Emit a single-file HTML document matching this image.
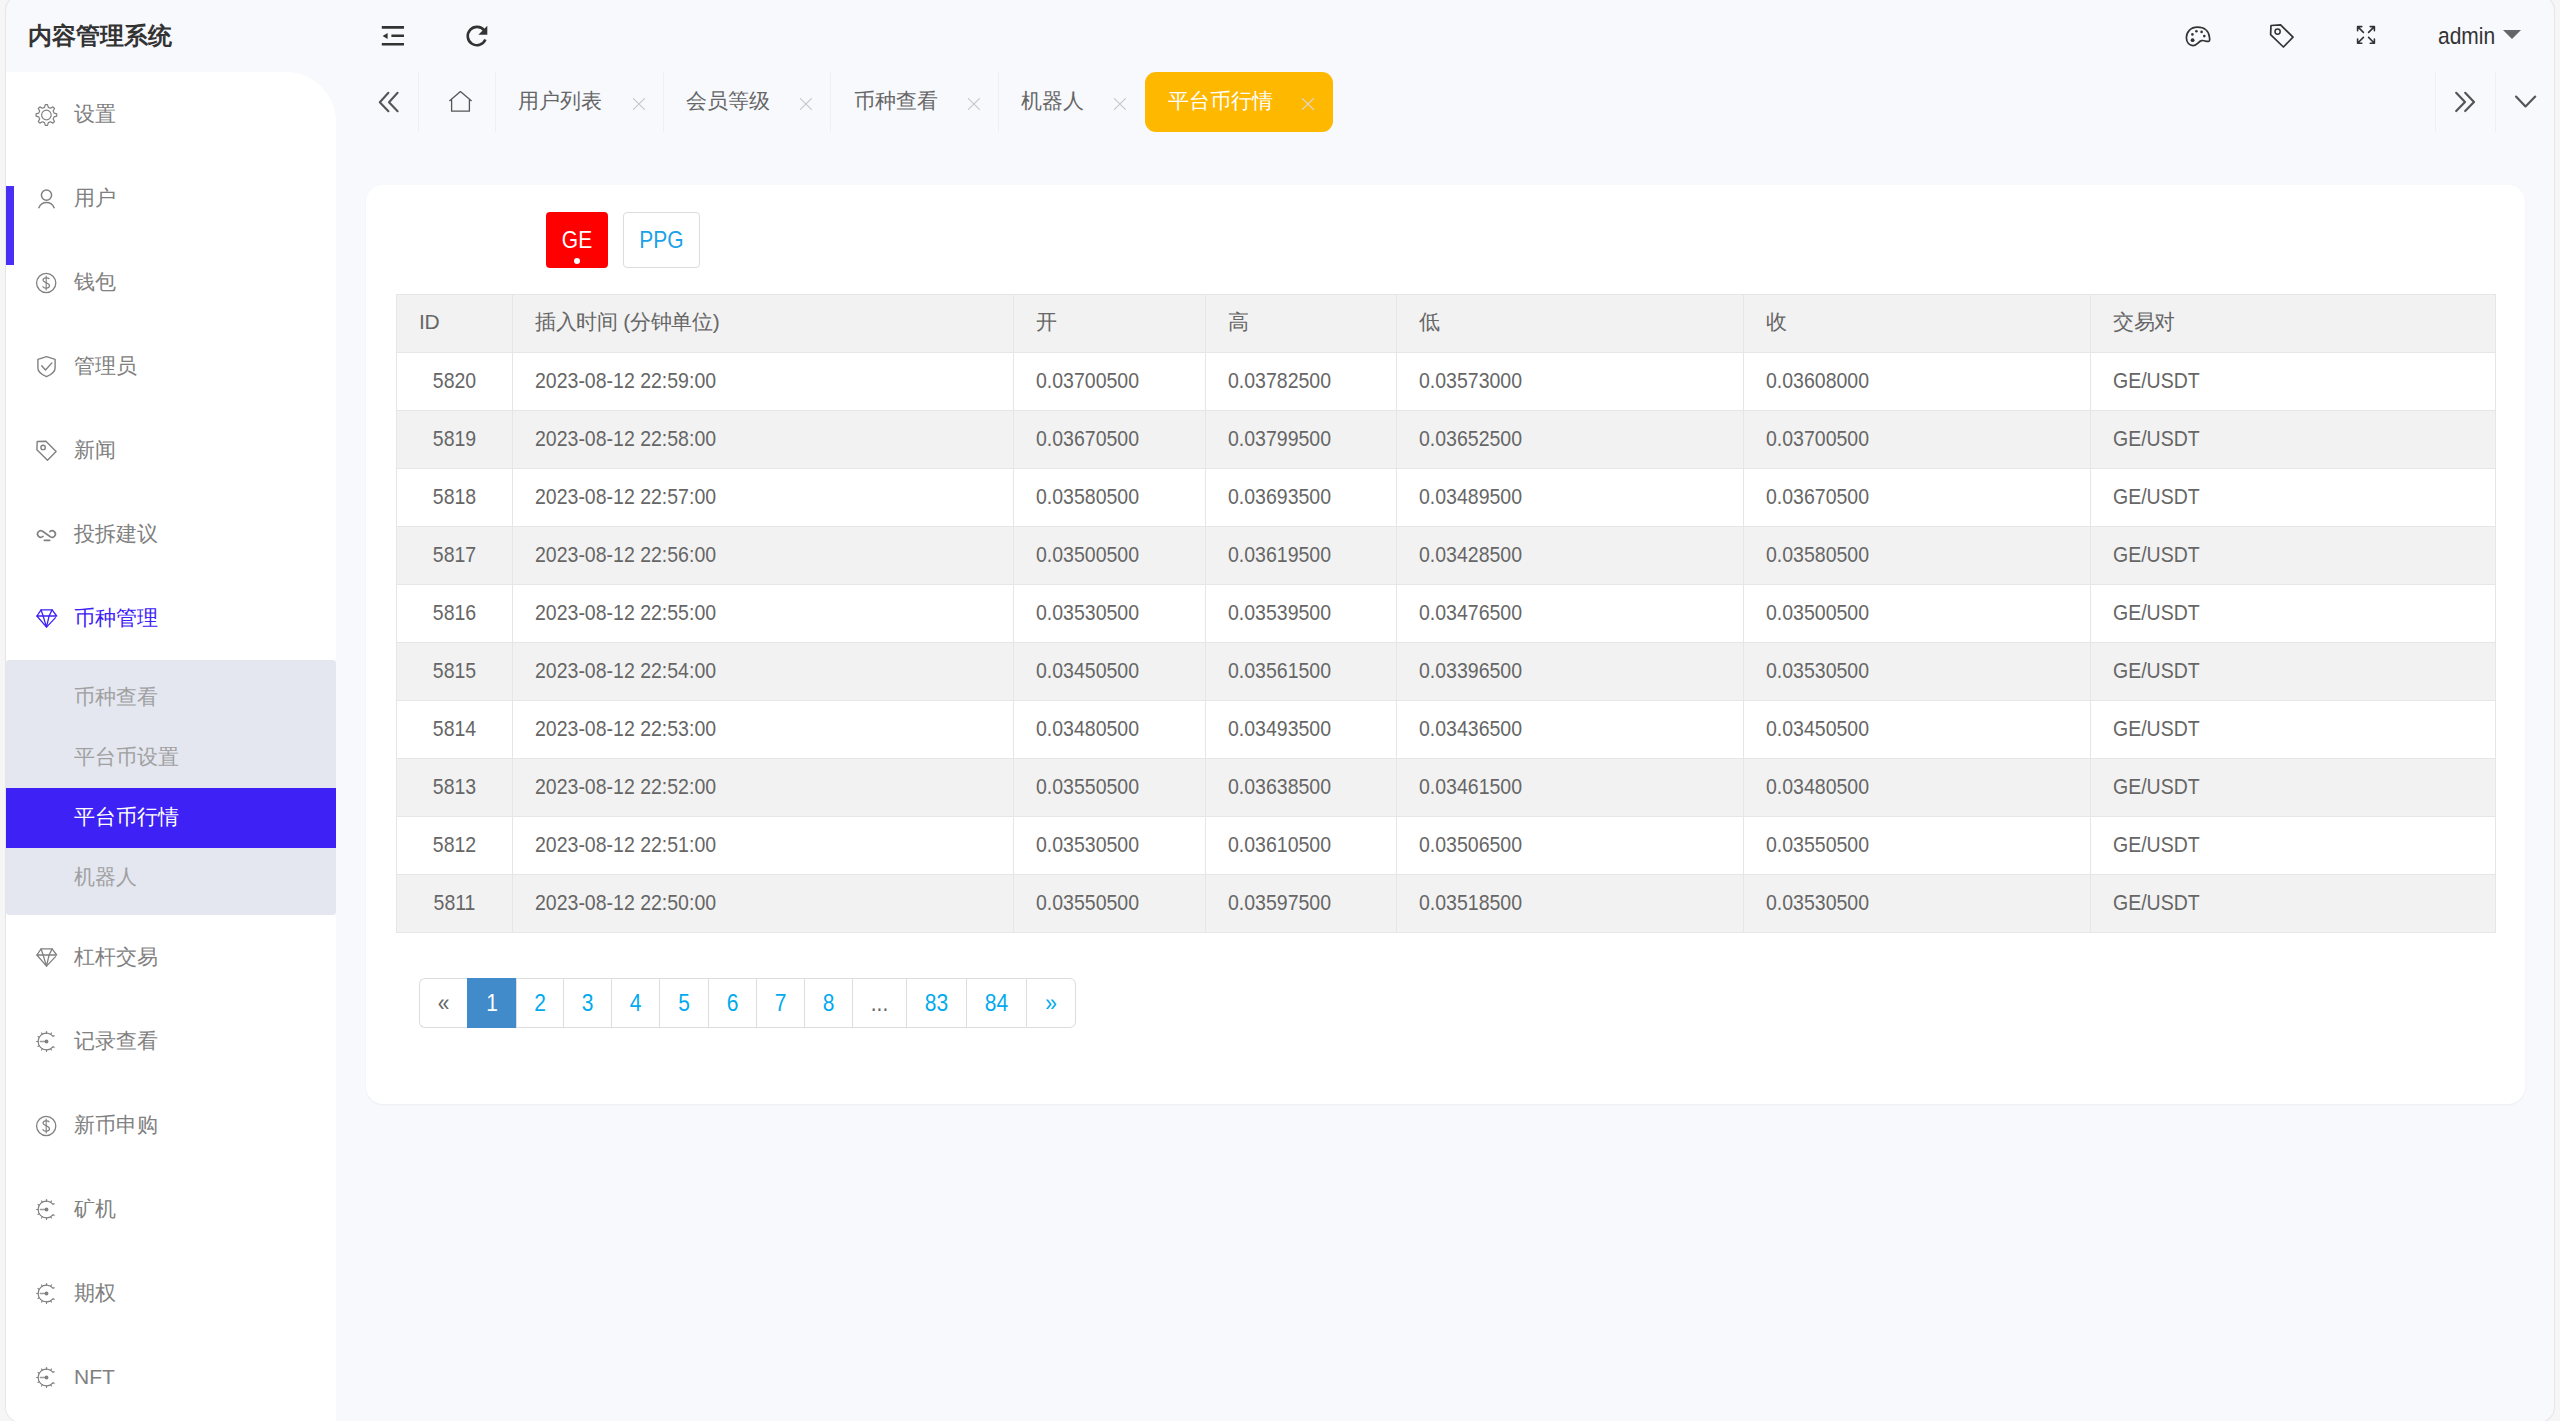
<!DOCTYPE html>
<html><head><meta charset="utf-8"><style>
*{box-sizing:border-box;margin:0;padding:0}
html,body{width:2560px;height:1421px;overflow:hidden;background:#f6f6f6;font-family:"Liberation Sans",sans-serif}
.a{position:absolute;white-space:nowrap}
#win{left:5px;top:-4px;width:2550px;height:1427px;border:1px solid #e6e6e6;border-radius:14px 14px 16px 16px;background:#f8f9fd;box-shadow:0 0 1px rgba(0,0,0,.05)}
#side{left:6px;top:72px;width:330px;height:1350px;background:#fff;border-top-right-radius:50px;border-bottom-left-radius:15px}
.mt{font-size:21px;line-height:30px;height:30px}
svg.i{position:absolute;overflow:visible}
.tb{font-size:21px;color:#666;line-height:30px;height:30px}
.sep{width:1px;height:60px;top:72px;background:#f0efee}
#card{left:366px;top:185px;width:2159px;height:919px;background:#fff;border-radius:17px;box-shadow:0 1px 2px rgba(0,0,0,.05)}
table{position:absolute;left:396px;top:294px;border-collapse:collapse;table-layout:fixed;font-size:19.5px;color:#666}
td,th{border:1px solid #e6e6e6;height:58px;padding:0 0 2px 22px;text-align:left;font-weight:normal;white-space:nowrap}
th{background:#f2f2f2;font-size:21px;letter-spacing:-0.3px;padding-bottom:3px}
tr.e td{background:#f2f2f2}
.sy,td span{display:inline-block;transform:scaleY(1.1);transform-origin:50% 50%}
td.c{text-align:center;padding:0 0 2px 0}
.pg{top:978px;height:50px;border:1px solid #ddd;border-right:none;font-size:21px;line-height:48px;text-align:center;color:#01aaed;background:#fff}
</style></head><body>
<div id="win" class="a"></div>
<div id="side" class="a"></div>
<div class="a" style="left:28px;top:21px;font-size:24px;font-weight:bold;color:#333;line-height:30px">内容管理系统</div>
<div class="a mt" style="left:74px;top:99px;color:#808080">设置</div>
<svg class="i" style="left:33px;top:102px" width="26" height="26" viewBox="33 102 26 26" fill="none" stroke="#808080" stroke-width="1.2" stroke-linecap="round" stroke-linejoin="round" ><path d="M44.52 107.33 L45.26 104.66 L47.54 104.66 L48.28 107.33 L50.50 108.25 L52.90 106.88 L54.52 108.50 L53.15 110.90 L54.07 113.12 L56.74 113.86 L56.74 116.14 L54.07 116.88 L53.15 119.10 L54.52 121.50 L52.90 123.12 L50.50 121.75 L48.28 122.67 L47.54 125.34 L45.26 125.34 L44.52 122.67 L42.30 121.75 L39.90 123.12 L38.28 121.50 L39.65 119.10 L38.73 116.88 L36.06 116.14 L36.06 113.86 L38.73 113.12 L39.65 110.90 L38.28 108.50 L39.90 106.88 L42.30 108.25Z"/><circle cx="46.4" cy="115" r="4.8"/></svg>
<div class="a mt" style="left:74px;top:183px;color:#808080">用户</div>
<svg class="i" style="left:33px;top:185px" width="26" height="26" viewBox="33 185 26 26" fill="none" stroke="#808080" stroke-width="1.5" stroke-linecap="round" stroke-linejoin="round" ><circle cx="46.5" cy="195.1" r="5.1"/><path d="M38.9 207.7 A8.2 8.2 0 0 1 54.1 207.7"/></svg>
<div class="a mt" style="left:74px;top:267px;color:#808080">钱包</div>
<svg class="i" style="left:33px;top:270px" width="26" height="26" viewBox="33 270 26 26" fill="none" stroke="#808080" stroke-width="1.3" stroke-linecap="round" stroke-linejoin="round" ><circle cx="46.2" cy="283" r="9.6"/><path d="M49.0 278.8 C48.400000000000006 277.4 43.0 277.2 43.0 280.2 C43.0 282.6 49.5 282.8 49.5 285.8 C49.5 288.8 43.6 288.6 42.900000000000006 286.6" stroke-width="1.2"/><path d="M46.2 276 V290" stroke-width="1.1"/></svg>
<div class="a mt" style="left:74px;top:351px;color:#808080">管理员</div>
<svg class="i" style="left:33px;top:353px" width="26" height="26" viewBox="33 353 26 26" fill="none" stroke="#808080" stroke-width="1.4" stroke-linecap="round" stroke-linejoin="round" ><path d="M46.5 356.7 L37.9 359.3 V368.0 C37.9 372.0 41.5 374.5 46.5 376.7 C51.5 374.5 55.1 372.0 55.1 368.0 V359.3 Z"/><path d="M41.7 365.7 L45.5 370.0 L51.9 362.9"/></svg>
<div class="a mt" style="left:74px;top:435px;color:#808080">新闻</div>
<svg class="i" style="left:32px;top:437px" width="28" height="28" viewBox="32 437 28 28" fill="none" stroke="#808080" stroke-width="1.4" stroke-linecap="round" stroke-linejoin="round" ><path d="M37.20 441.50 L45.90 441.30 L56.10 451.50 L47.50 460.20 L36.90 449.80Z"/><circle cx="43.1" cy="447.4" r="2.2"/></svg>
<div class="a mt" style="left:74px;top:519px;color:#808080">投拆建议</div>
<svg class="i" style="left:33px;top:521px" width="26" height="26" viewBox="33 521 26 26" fill="none" stroke="#808080" stroke-width="1.6" stroke-linecap="round" stroke-linejoin="round" ><path d="M42.89 531.51 A3.25 3.25 0 1 0 43.10 536.30"/><path d="M42.89 531.51 L50.01 536.49 A3.25 3.25 0 1 0 49.80 531.70"/><path d="M44.3 540.4 H49.7" /></svg>
<div class="a mt" style="left:74px;top:603px;color:#3d21f5">币种管理</div>
<svg class="i" style="left:33px;top:605px" width="26" height="26" viewBox="33 605 26 26" fill="none" stroke="#3d21f5" stroke-width="1.3" stroke-linecap="round" stroke-linejoin="round" ><path d="M41.1 609.9 H52.1 L56.7 616.0 H36.9 Z"/><path d="M36.9 616.0 L46.5 627.1 L55.5 617.6"/><path d="M41.1 609.9 L43.1 616.0 L46.5 627.1 L49.1 616.0 L52.1 609.9"/></svg>
<div class="a mt" style="left:74px;top:942px;color:#808080">杠杆交易</div>
<svg class="i" style="left:33px;top:944px" width="26" height="26" viewBox="33 944 26 26" fill="none" stroke="#808080" stroke-width="1.3" stroke-linecap="round" stroke-linejoin="round" ><path d="M41.1 948.9 H52.1 L56.7 955.0 H36.9 Z"/><path d="M36.9 955.0 L46.5 966.1 L55.5 956.6"/><path d="M41.1 948.9 L43.1 955.0 L46.5 966.1 L49.1 955.0 L52.1 948.9"/></svg>
<div class="a mt" style="left:74px;top:1026px;color:#808080">记录查看</div>
<svg class="i" style="left:33px;top:1028px" width="26" height="26" viewBox="33 1028 26 26" fill="none" stroke="#808080" stroke-width="1.2" stroke-linecap="round" stroke-linejoin="round" ><path d="M52.93 1036.10 A8.4 8.4 0 1 0 52.93 1046.90"/><path d="M39.23 1037.30 L37.93 1036.55" stroke-width="1.1"/><path d="M42.30 1034.23 L41.55 1032.93" stroke-width="1.1"/><path d="M46.50 1033.10 L46.50 1031.60" stroke-width="1.1"/><path d="M50.70 1034.23 L51.45 1032.93" stroke-width="1.1"/><path d="M38.10 1041.50 L36.60 1041.50" stroke-width="1.1"/><path d="M39.23 1045.70 L37.93 1046.45" stroke-width="1.1"/><path d="M42.30 1048.77 L41.55 1050.07" stroke-width="1.1"/><path d="M46.50 1049.90 L46.50 1051.40" stroke-width="1.1"/><path d="M50.70 1048.77 L51.45 1050.07" stroke-width="1.1"/><path d="M52.93 1036.10 L54.33 1035.80 M52.93 1046.90 L54.33 1047.20" stroke-width="1.1"/><path d="M40.3 1041.5 H46.5" stroke-width="1.3" stroke="#9a9a9a"/><circle cx="46.5" cy="1041.5" r="1.9" fill="#808080" stroke="none"/></svg>
<div class="a mt" style="left:74px;top:1110px;color:#808080">新币申购</div>
<svg class="i" style="left:33px;top:1113px" width="26" height="26" viewBox="33 1113 26 26" fill="none" stroke="#808080" stroke-width="1.3" stroke-linecap="round" stroke-linejoin="round" ><circle cx="46.2" cy="1126" r="9.6"/><path d="M49.0 1121.8 C48.400000000000006 1120.4 43.0 1120.2 43.0 1123.2 C43.0 1125.6 49.5 1125.8 49.5 1128.8 C49.5 1131.8 43.6 1131.6 42.900000000000006 1129.6" stroke-width="1.2"/><path d="M46.2 1119 V1133" stroke-width="1.1"/></svg>
<div class="a mt" style="left:74px;top:1194px;color:#808080">矿机</div>
<svg class="i" style="left:33px;top:1196px" width="26" height="26" viewBox="33 1196 26 26" fill="none" stroke="#808080" stroke-width="1.2" stroke-linecap="round" stroke-linejoin="round" ><path d="M52.93 1204.10 A8.4 8.4 0 1 0 52.93 1214.90"/><path d="M39.23 1205.30 L37.93 1204.55" stroke-width="1.1"/><path d="M42.30 1202.23 L41.55 1200.93" stroke-width="1.1"/><path d="M46.50 1201.10 L46.50 1199.60" stroke-width="1.1"/><path d="M50.70 1202.23 L51.45 1200.93" stroke-width="1.1"/><path d="M38.10 1209.50 L36.60 1209.50" stroke-width="1.1"/><path d="M39.23 1213.70 L37.93 1214.45" stroke-width="1.1"/><path d="M42.30 1216.77 L41.55 1218.07" stroke-width="1.1"/><path d="M46.50 1217.90 L46.50 1219.40" stroke-width="1.1"/><path d="M50.70 1216.77 L51.45 1218.07" stroke-width="1.1"/><path d="M52.93 1204.10 L54.33 1203.80 M52.93 1214.90 L54.33 1215.20" stroke-width="1.1"/><path d="M40.3 1209.5 H46.5" stroke-width="1.3" stroke="#9a9a9a"/><circle cx="46.5" cy="1209.5" r="1.9" fill="#808080" stroke="none"/></svg>
<div class="a mt" style="left:74px;top:1278px;color:#808080">期权</div>
<svg class="i" style="left:33px;top:1280px" width="26" height="26" viewBox="33 1280 26 26" fill="none" stroke="#808080" stroke-width="1.2" stroke-linecap="round" stroke-linejoin="round" ><path d="M52.93 1288.10 A8.4 8.4 0 1 0 52.93 1298.90"/><path d="M39.23 1289.30 L37.93 1288.55" stroke-width="1.1"/><path d="M42.30 1286.23 L41.55 1284.93" stroke-width="1.1"/><path d="M46.50 1285.10 L46.50 1283.60" stroke-width="1.1"/><path d="M50.70 1286.23 L51.45 1284.93" stroke-width="1.1"/><path d="M38.10 1293.50 L36.60 1293.50" stroke-width="1.1"/><path d="M39.23 1297.70 L37.93 1298.45" stroke-width="1.1"/><path d="M42.30 1300.77 L41.55 1302.07" stroke-width="1.1"/><path d="M46.50 1301.90 L46.50 1303.40" stroke-width="1.1"/><path d="M50.70 1300.77 L51.45 1302.07" stroke-width="1.1"/><path d="M52.93 1288.10 L54.33 1287.80 M52.93 1298.90 L54.33 1299.20" stroke-width="1.1"/><path d="M40.3 1293.5 H46.5" stroke-width="1.3" stroke="#9a9a9a"/><circle cx="46.5" cy="1293.5" r="1.9" fill="#808080" stroke="none"/></svg>
<div class="a mt" style="left:74px;top:1362px;color:#808080">NFT</div>
<svg class="i" style="left:33px;top:1364px" width="26" height="26" viewBox="33 1364 26 26" fill="none" stroke="#808080" stroke-width="1.2" stroke-linecap="round" stroke-linejoin="round" ><path d="M52.93 1372.10 A8.4 8.4 0 1 0 52.93 1382.90"/><path d="M39.23 1373.30 L37.93 1372.55" stroke-width="1.1"/><path d="M42.30 1370.23 L41.55 1368.93" stroke-width="1.1"/><path d="M46.50 1369.10 L46.50 1367.60" stroke-width="1.1"/><path d="M50.70 1370.23 L51.45 1368.93" stroke-width="1.1"/><path d="M38.10 1377.50 L36.60 1377.50" stroke-width="1.1"/><path d="M39.23 1381.70 L37.93 1382.45" stroke-width="1.1"/><path d="M42.30 1384.77 L41.55 1386.07" stroke-width="1.1"/><path d="M46.50 1385.90 L46.50 1387.40" stroke-width="1.1"/><path d="M50.70 1384.77 L51.45 1386.07" stroke-width="1.1"/><path d="M52.93 1372.10 L54.33 1371.80 M52.93 1382.90 L54.33 1383.20" stroke-width="1.1"/><path d="M40.3 1377.5 H46.5" stroke-width="1.3" stroke="#9a9a9a"/><circle cx="46.5" cy="1377.5" r="1.9" fill="#808080" stroke="none"/></svg>
<div class="a" style="left:6px;top:186px;width:8px;height:79px;background:#492ef6"></div>
<div class="a" style="left:6px;top:660px;width:330px;height:255px;background:#e4e7f0;border-radius:3px"></div>
<div class="a" style="left:6px;top:788px;width:330px;height:60px;background:#3d21f5"></div>
<div class="a mt" style="left:74px;top:682px;color:#a0a0a0">币种查看</div>
<div class="a mt" style="left:74px;top:742px;color:#a0a0a0">平台币设置</div>
<div class="a mt" style="left:74px;top:802px;color:#fff">平台币行情</div>
<div class="a mt" style="left:74px;top:862px;color:#a0a0a0">机器人</div>
<svg class="i" style="left:378px;top:22px" width="30" height="28" viewBox="378 22 30 28" fill="none" stroke="#333" stroke-width="2.6" stroke-linecap="round" stroke-linejoin="round" ><path d="M381.8 27.4 H404 M391.4 35.7 H404 M381.8 44.2 H404" stroke-width="2.6" stroke-linecap="butt"/><path d="M382.6 35.9 L387.6 32.9 V39 Z" fill="#333" stroke="none"/></svg>
<svg class="i" style="left:462px;top:22px" width="30" height="30" viewBox="462 22 30 30" fill="none" stroke="#333" stroke-width="2.6" stroke-linecap="round" stroke-linejoin="round" ><path d="M485.4 39.6 A9.2 9.2 0 1 1 484.2 30.4" stroke-width="2.6" stroke-linecap="butt"/><path d="M487.3 25.8 V34.7 H478.4 Z" fill="#333" stroke="none"/></svg>
<svg class="i" style="left:2182px;top:22px" width="32" height="28" viewBox="2182 22 32 28" fill="none" stroke="#333" stroke-width="1.7" stroke-linecap="round" stroke-linejoin="round" ><path d="M2197.5 27.2 C2190.5 27.2 2186.4 32 2186.4 37.8 C2186.4 42.6 2189.6 45.6 2193 45.6 C2197 45.6 2198.2 41.4 2201.6 40.6 C2204.5 40 2205.6 41.8 2208.6 41.4 C2210.2 41.2 2209.6 38.6 2209.4 37 C2208.8 31 2204.4 27.2 2197.5 27.2 Z" stroke-width="1.7"/><circle cx="2192.6" cy="40.2" r="1.9" fill="#333" stroke="none"/><circle cx="2192.4" cy="34.4" r="1.3" fill="#333" stroke="none"/><circle cx="2196.4" cy="31.3" r="1.3" fill="#333" stroke="none"/><circle cx="2201.6" cy="31.9" r="1.3" fill="#333" stroke="none"/><circle cx="2204.3" cy="36.1" r="1.3" fill="#333" stroke="none"/></svg>
<svg class="i" style="left:2266px;top:20px" width="32" height="32" viewBox="2266 20 32 32" fill="none" stroke="#333" stroke-width="1.7" stroke-linecap="round" stroke-linejoin="round" ><path d="M2271 25.5 L2280.6 24.8 L2293 37.2 L2283.4 47 L2270.6 34.6 Z" stroke-width="1.7"/><circle cx="2277.6" cy="31.6" r="2.6" stroke-width="1.5"/></svg>
<svg class="i" style="left:2352px;top:22px" width="28" height="26" viewBox="2352 22 28 26" fill="none" stroke="#333" stroke-width="1.6" stroke-linecap="round" stroke-linejoin="round" ><path d="M2357.6 26.6 L2363.4 32.4 M2357.6 26.6 V30.8 M2357.6 26.6 H2361.8"/><path d="M2374.4 26.6 L2368.6 32.4 M2374.4 26.6 V30.8 M2374.4 26.6 H2370.2"/><path d="M2357.6 43.2 L2363.4 37.4 M2357.6 43.2 V39 M2357.6 43.2 H2361.8"/><path d="M2374.4 43.2 L2368.6 37.4 M2374.4 43.2 V39 M2374.4 43.2 H2370.2"/></svg>
<div class="a" style="left:2438px;top:21px;font-size:21px;color:#333;line-height:30px"><span class="sy">admin</span></div>
<div class="a" style="left:2503px;top:30px;width:0;height:0;border-left:9px solid transparent;border-right:9px solid transparent;border-top:9px solid #666"></div>
<svg class="i" style="left:374px;top:88px" width="28" height="28" viewBox="374 88 28 28" fill="none" stroke="#555" stroke-width="2.3" stroke-linecap="round" stroke-linejoin="round" ><path d="M388.4 92.8 L379.8 102.2 L388.4 111.2 M397.6 92.8 L389 102.2 L397.6 111.2" stroke-width="2.1"/></svg>
<svg class="i" style="left:444px;top:86px" width="32" height="30" viewBox="444 86 32 30" fill="none" stroke="#555" stroke-width="1.3" stroke-linecap="round" stroke-linejoin="round" ><path d="M449.4 101 L460.4 91.6 L471.6 101 M451.6 99.8 V111.2 H469.4 V99.8" stroke-width="1.3" stroke-linecap="butt"/></svg>
<div class="a sep" style="left:418px"></div>
<div class="a sep" style="left:495px"></div>
<div class="a sep" style="left:663px"></div>
<div class="a sep" style="left:830px"></div>
<div class="a sep" style="left:998px"></div>
<div class="a sep" style="left:2435px"></div>
<div class="a sep" style="left:2495px"></div>
<div class="a" style="left:1145px;top:72px;width:188px;height:60px;background:#ffb800;border-radius:11px"></div>
<div class="a tb" style="left:518px;top:86px;color:#666">用户列表</div>
<svg class="i" style="left:631px;top:96px" width="16" height="16" viewBox="631 96 16 16" fill="none" stroke="#c8c8c8" stroke-width="1.2" stroke-linecap="round" stroke-linejoin="round" ><path d="M633.4 98.6 L644.4 109.4 M644.4 98.6 L633.4 109.4"/></svg>
<div class="a tb" style="left:686px;top:86px;color:#666">会员等级</div>
<svg class="i" style="left:798px;top:96px" width="16" height="16" viewBox="798 96 16 16" fill="none" stroke="#c8c8c8" stroke-width="1.2" stroke-linecap="round" stroke-linejoin="round" ><path d="M800.4 98.6 L811.4 109.4 M811.4 98.6 L800.4 109.4"/></svg>
<div class="a tb" style="left:854px;top:86px;color:#666">币种查看</div>
<svg class="i" style="left:966px;top:96px" width="16" height="16" viewBox="966 96 16 16" fill="none" stroke="#c8c8c8" stroke-width="1.2" stroke-linecap="round" stroke-linejoin="round" ><path d="M968.4 98.6 L979.4 109.4 M979.4 98.6 L968.4 109.4"/></svg>
<div class="a tb" style="left:1021px;top:86px;color:#666">机器人</div>
<svg class="i" style="left:1112px;top:96px" width="16" height="16" viewBox="1112 96 16 16" fill="none" stroke="#c8c8c8" stroke-width="1.2" stroke-linecap="round" stroke-linejoin="round" ><path d="M1114.4 98.6 L1125.4 109.4 M1125.4 98.6 L1114.4 109.4"/></svg>
<div class="a tb" style="left:1168px;top:86px;color:#fff">平台币行情</div>
<svg class="i" style="left:1300px;top:96px" width="16" height="16" viewBox="1300 96 16 16" fill="none" stroke="#d9d9d9" stroke-width="1.2" stroke-linecap="round" stroke-linejoin="round" ><path d="M1302.4 98.6 L1313.4 109.4 M1313.4 98.6 L1302.4 109.4"/></svg>
<svg class="i" style="left:2450px;top:88px" width="30" height="28" viewBox="2450 88 30 28" fill="none" stroke="#555" stroke-width="2.2" stroke-linecap="round" stroke-linejoin="round" ><path d="M2456.2 92.8 L2465 102 L2456.2 111 M2465.2 92.8 L2474 102 L2465.2 111" stroke-width="2.2"/></svg>
<svg class="i" style="left:2510px;top:90px" width="30" height="22" viewBox="2510 90 30 22" fill="none" stroke="#555" stroke-width="2.2" stroke-linecap="round" stroke-linejoin="round" ><path d="M2516 96.6 L2525.5 106.4 L2535.2 96.6" stroke-width="2.2"/></svg>
<div id="card" class="a"></div>
<div class="a" style="left:546px;top:212px;width:62px;height:56px;background:#ff0000;border-radius:4px;color:#fff;font-size:21px;line-height:56px;text-align:center"><span class="sy">GE</span></div>
<div class="a" style="left:573.5px;top:257.5px;width:6px;height:6px;background:#fff;border-radius:50%"></div>
<div class="a" style="left:623px;top:212px;width:77px;height:56px;background:#fff;border:1px solid #dcdcdc;border-radius:4px;color:#1aa1e6;font-size:21px;line-height:54px;text-align:center"><span class="sy">PPG</span></div>
<table><colgroup><col style="width:116px"><col style="width:501px"><col style="width:192px"><col style="width:191px"><col style="width:347px"><col style="width:347px"><col style="width:405px"></colgroup><tr><th>ID</th><th>插入时间 (分钟单位)</th><th>开</th><th>高</th><th>低</th><th>收</th><th>交易对</th></tr><tr><td class="c"><span>5820</span></td><td><span>2023-08-12 22:59:00</span></td><td><span>0.03700500</span></td><td><span>0.03782500</span></td><td><span>0.03573000</span></td><td><span>0.03608000</span></td><td><span>GE/USDT</span></td></tr><tr class="e"><td class="c"><span>5819</span></td><td><span>2023-08-12 22:58:00</span></td><td><span>0.03670500</span></td><td><span>0.03799500</span></td><td><span>0.03652500</span></td><td><span>0.03700500</span></td><td><span>GE/USDT</span></td></tr><tr><td class="c"><span>5818</span></td><td><span>2023-08-12 22:57:00</span></td><td><span>0.03580500</span></td><td><span>0.03693500</span></td><td><span>0.03489500</span></td><td><span>0.03670500</span></td><td><span>GE/USDT</span></td></tr><tr class="e"><td class="c"><span>5817</span></td><td><span>2023-08-12 22:56:00</span></td><td><span>0.03500500</span></td><td><span>0.03619500</span></td><td><span>0.03428500</span></td><td><span>0.03580500</span></td><td><span>GE/USDT</span></td></tr><tr><td class="c"><span>5816</span></td><td><span>2023-08-12 22:55:00</span></td><td><span>0.03530500</span></td><td><span>0.03539500</span></td><td><span>0.03476500</span></td><td><span>0.03500500</span></td><td><span>GE/USDT</span></td></tr><tr class="e"><td class="c"><span>5815</span></td><td><span>2023-08-12 22:54:00</span></td><td><span>0.03450500</span></td><td><span>0.03561500</span></td><td><span>0.03396500</span></td><td><span>0.03530500</span></td><td><span>GE/USDT</span></td></tr><tr><td class="c"><span>5814</span></td><td><span>2023-08-12 22:53:00</span></td><td><span>0.03480500</span></td><td><span>0.03493500</span></td><td><span>0.03436500</span></td><td><span>0.03450500</span></td><td><span>GE/USDT</span></td></tr><tr class="e"><td class="c"><span>5813</span></td><td><span>2023-08-12 22:52:00</span></td><td><span>0.03550500</span></td><td><span>0.03638500</span></td><td><span>0.03461500</span></td><td><span>0.03480500</span></td><td><span>GE/USDT</span></td></tr><tr><td class="c"><span>5812</span></td><td><span>2023-08-12 22:51:00</span></td><td><span>0.03530500</span></td><td><span>0.03610500</span></td><td><span>0.03506500</span></td><td><span>0.03550500</span></td><td><span>GE/USDT</span></td></tr><tr class="e"><td class="c"><span>5811</span></td><td><span>2023-08-12 22:50:00</span></td><td><span>0.03550500</span></td><td><span>0.03597500</span></td><td><span>0.03518500</span></td><td><span>0.03530500</span></td><td><span>GE/USDT</span></td></tr></table>
<div class="a pg" style="left:419px;width:48px;border-radius:6px 0 0 6px;color:#666;"><span class="sy">«</span></div>
<div class="a pg" style="left:467px;width:49px;background:#428bca;border-color:#428bca;color:#fff;"><span class="sy">1</span></div>
<div class="a pg" style="left:516px;width:47px;"><span class="sy">2</span></div>
<div class="a pg" style="left:563px;width:48px;"><span class="sy">3</span></div>
<div class="a pg" style="left:611px;width:48px;"><span class="sy">4</span></div>
<div class="a pg" style="left:659px;width:49px;"><span class="sy">5</span></div>
<div class="a pg" style="left:708px;width:48px;"><span class="sy">6</span></div>
<div class="a pg" style="left:756px;width:48px;"><span class="sy">7</span></div>
<div class="a pg" style="left:804px;width:48px;"><span class="sy">8</span></div>
<div class="a pg" style="left:852px;width:54px;color:#666;"><span class="sy">...</span></div>
<div class="a pg" style="left:906px;width:60px;"><span class="sy">83</span></div>
<div class="a pg" style="left:966px;width:60px;"><span class="sy">84</span></div>
<div class="a pg" style="left:1026px;width:50px;border-right:1px solid #ddd;border-radius:0 6px 6px 0;"><span class="sy">»</span></div>
</body></html>
